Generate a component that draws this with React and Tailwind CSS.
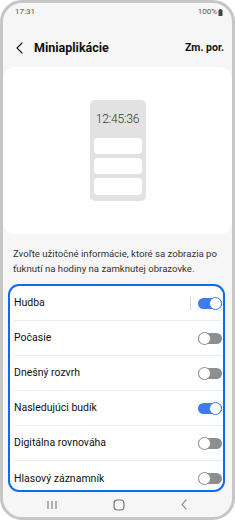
import React from 'react';

const items = [
  { label: 'Hudba', on: true, divider: true },
  { label: 'Počasie', on: false },
  { label: 'Dnešný rozvrh', on: false },
  { label: 'Nasledujúci budík', on: true },
  { label: 'Digitálna rovnováha', on: false },
  { label: 'Hlasový záznamník', on: false },
];

const Toggle = ({ on }) => (
  <div
    className={`w-[24px] h-[11px] rounded-full flex items-center ${
      on ? 'bg-[#3e7bf0] justify-end' : 'bg-[#8e8e8e] justify-start'
    }`}
  >
    <div
      className={`w-[13px] h-[13px] -my-[1px] rounded-full bg-white border-[1.5px] ${
        on ? 'border-[#3e7bf0]' : 'border-[#8e8e8e]'
      }`}
    />
  </div>
);

const Battery = () => (
  <svg width="5" height="7" viewBox="0 0 5 7">
    <rect x="1.5" y="0" width="2" height="1" fill="#444" />
    <rect x="0.5" y="1" width="4" height="6" rx="0.5" fill="#444" />
  </svg>
);

export default function App() {
  return (
    <div className="w-[235px] h-[520px] bg-white" style={{ fontFamily: 'Roboto, "Noto Sans", sans-serif' }}>
      <div className="w-full h-full border-[3px] border-[#c6c6c6] rounded-[22px] bg-[#f6f6f6] overflow-hidden flex flex-col">
        {/* Status bar */}
        <div className="h-[18px] shrink-0 flex items-center justify-between pl-[12px] pr-[9px] text-[8px] text-[#555]">
          <span>17:31</span>
          <span className="flex items-center gap-[1px]">
            100%
            <Battery />
          </span>
        </div>

        {/* Header */}
        <div className="h-[46px] shrink-0 pt-[8px] flex items-center pl-[12px] pr-[8px]">
          <svg width="10" height="12" viewBox="0 0 10 12" className="mr-[9px]">
            <path d="M7 1 L2 6 L7 11" fill="none" stroke="#222" strokeWidth="1.2" strokeLinecap="round" strokeLinejoin="round" />
          </svg>
          <span className="text-[12.5px] font-bold text-[#111] flex-1">Miniaplikácie</span>
          <span className="text-[10.5px] font-bold text-[#111]">Zm. por.</span>
        </div>

        {/* Preview */}
        <div className="h-[167px] shrink-0 bg-white rounded-[12px] flex items-center justify-center">
          <div className="w-[56px] h-[101px] bg-[#e2e2e2] rounded-[5px] flex flex-col items-center px-[4px] pb-[6px]">
            <div className="flex-1 flex items-center text-[12px] font-light text-[#333] tracking-[-0.2px]">12:45:36</div>
            <div className="w-full flex flex-col gap-[4px]">
              <div className="h-[16px] bg-white rounded-[4px]" />
              <div className="h-[16px] bg-white rounded-[4px]" />
              <div className="h-[17px] bg-white rounded-[4px]" />
            </div>
          </div>
        </div>

        {/* Description */}
        <p className="pt-[12px] pb-[8px] pl-[10px] pr-[8px] text-[9.6px] leading-[15px] text-[#333]">
          Zvoľte užitočné informácie, ktoré sa zobrazia po ťuknutí na hodiny na zamknutej obrazovke.
        </p>

        {/* List */}
        <div className="h-[208px] shrink-0 pl-[5px] pr-[7px]">
          <div className="h-full border-2 border-[#0b6cf2] rounded-[11px] bg-white overflow-hidden">
            {items.map((item, i) => (
              <div key={item.label} className="h-[35px] pl-[4px] pr-[1px] flex flex-col">
                <div className="flex-1 flex items-center">
                  <span className="flex-1 text-[10.5px] text-[#111]">{item.label}</span>
                  {item.divider && <div className="w-px h-[14px] bg-[#d9d9d9] mr-[7px]" />}
                  <Toggle on={item.on} />
                </div>
                {i < items.length - 1 && <div className="h-px bg-[#ececec]" />}
              </div>
            ))}
          </div>
        </div>

        {/* Nav bar */}
        <div className="h-[25px] shrink-0 flex items-center justify-center gap-[55px] pr-[2px]">
          <svg width="12" height="10" viewBox="0 0 12 10">
            <path d="M2 1 V9 M6 1 V9 M10 1 V9" stroke="#777" strokeWidth="1.1" />
          </svg>
          <svg width="12" height="12" viewBox="0 0 12 12">
            <rect x="1" y="1" width="10" height="10" rx="3.5" fill="none" stroke="#777" strokeWidth="1.2" />
          </svg>
          <svg width="8" height="11" viewBox="0 0 8 11">
            <path d="M6 1 L2 5.5 L6 10" fill="none" stroke="#777" strokeWidth="1.1" strokeLinecap="round" strokeLinejoin="round" />
          </svg>
        </div>
      </div>
    </div>
  );
}
